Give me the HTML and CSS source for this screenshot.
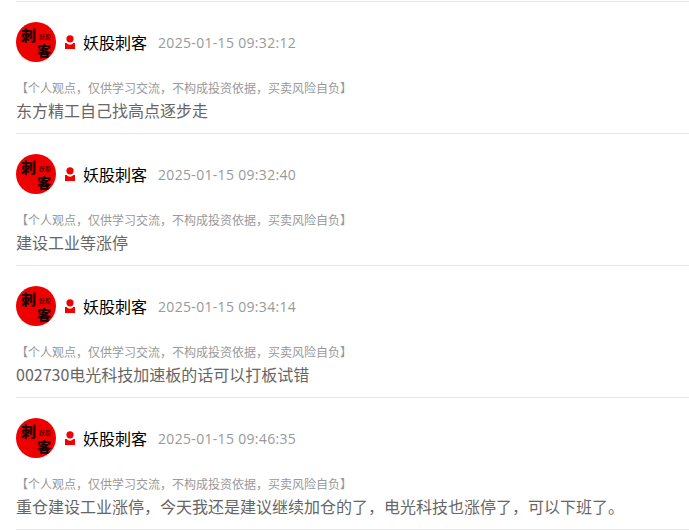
FILE: index.html
```html
<!DOCTYPE html>
<html lang="zh-CN">
<head>
<meta charset="utf-8">
<title>妖股刺客</title>
<link rel="stylesheet" href="styles.css">
</head>
<body>
<ul class="feed">
  <li class="post">
    <div class="head">
      <div class="avatar"><span class="a1">刺</span><span class="a2">客</span><span class="a3">妖股</span></div>
      <svg class="user" viewBox="0 0 10 14"><circle cx="5" cy="3.8" r="3.6"/><path d="M0 8h1.6a4.3 4.3 0 0 0 6.8 0H10V14H0z"/></svg>
      <span class="name">妖股刺客</span>
      <span class="time">2025-01-15 09:32:12</span>
    </div>
    <p class="note">【个人观点，仅供学习交流，不构成投资依据，买卖风险自负】</p>
    <p class="text">东方精工自己找高点逐步走</p>
  </li>
  <li class="post">
    <div class="head">
      <div class="avatar"><span class="a1">刺</span><span class="a2">客</span><span class="a3">妖股</span></div>
      <svg class="user" viewBox="0 0 10 14"><circle cx="5" cy="3.8" r="3.6"/><path d="M0 8h1.6a4.3 4.3 0 0 0 6.8 0H10V14H0z"/></svg>
      <span class="name">妖股刺客</span>
      <span class="time">2025-01-15 09:32:40</span>
    </div>
    <p class="note">【个人观点，仅供学习交流，不构成投资依据，买卖风险自负】</p>
    <p class="text">建设工业等涨停</p>
  </li>
  <li class="post">
    <div class="head">
      <div class="avatar"><span class="a1">刺</span><span class="a2">客</span><span class="a3">妖股</span></div>
      <svg class="user" viewBox="0 0 10 14"><circle cx="5" cy="3.8" r="3.6"/><path d="M0 8h1.6a4.3 4.3 0 0 0 6.8 0H10V14H0z"/></svg>
      <span class="name">妖股刺客</span>
      <span class="time">2025-01-15 09:34:14</span>
    </div>
    <p class="note">【个人观点，仅供学习交流，不构成投资依据，买卖风险自负】</p>
    <p class="text">002730电光科技加速板的话可以打板试错</p>
  </li>
  <li class="post">
    <div class="head">
      <div class="avatar"><span class="a1">刺</span><span class="a2">客</span><span class="a3">妖股</span></div>
      <svg class="user" viewBox="0 0 10 14"><circle cx="5" cy="3.8" r="3.6"/><path d="M0 8h1.6a4.3 4.3 0 0 0 6.8 0H10V14H0z"/></svg>
      <span class="name">妖股刺客</span>
      <span class="time">2025-01-15 09:46:35</span>
    </div>
    <p class="note">【个人观点，仅供学习交流，不构成投资依据，买卖风险自负】</p>
    <p class="text">重仓建设工业涨停，今天我还是建议继续加仓的了，电光科技也涨停了，可以下班了。</p>
  </li>
</ul>
</body>
</html>
```
FILE: styles.css
```css
html, body {
  margin: 0;
  padding: 0;
  background: #fff;
  overflow: hidden;
}
body {
  font-family: "Open Sans", "Noto Sans CJK SC", sans-serif;
}
.feed {
  list-style: none;
  margin: 1px 0 0 16px;
  padding: 0;
  border-top: 1px solid #e6e6e6;
}
.post {
  padding-top: 20px;
  height: 111px;
  border-bottom: 1px solid #e6e6e6;
}
.head {
  display: flex;
  align-items: center;
  height: 40px;
}
.avatar {
  position: relative;
  width: 40px;
  height: 40px;
  border-radius: 50%;
  background: #ee0000;
  color: #1a0000;
  font-family: "Noto Sans CJK SC", sans-serif;
  font-weight: 900;
  flex: none;
}
.avatar span {
  position: absolute;
  line-height: 1;
}
.a1 {
  left: 5px;
  top: 5px;
  font-size: 15px;
}
.a2 {
  left: 21px;
  top: 21px;
  font-size: 14px;
}
.a3 {
  left: 23px;
  top: 12px;
  font-size: 6px;
  font-weight: 400;
  white-space: nowrap;
}
.user {
  width: 10px;
  height: 14px;
  margin-left: 9px;
  fill: #f00000;
  flex: none;
}
.name {
  margin-left: 8px;
  font-size: 16px;
  color: #000;
  font-family: "Noto Sans CJK SC", sans-serif;
}
.time {
  margin-left: 11px;
  font-size: 14px;
  letter-spacing: 0.32px;
  color: #999;
}
.note {
  margin: 17px 0 0;
  font-size: 12px;
  line-height: 18px;
  color: #999;
  font-family: "Noto Sans CJK SC", sans-serif;
}
.text {
  margin: 1px 0 0;
  font-size: 16px;
  line-height: 24px;
  color: #666;
  font-family: "Noto Sans CJK SC", sans-serif;
}
```
